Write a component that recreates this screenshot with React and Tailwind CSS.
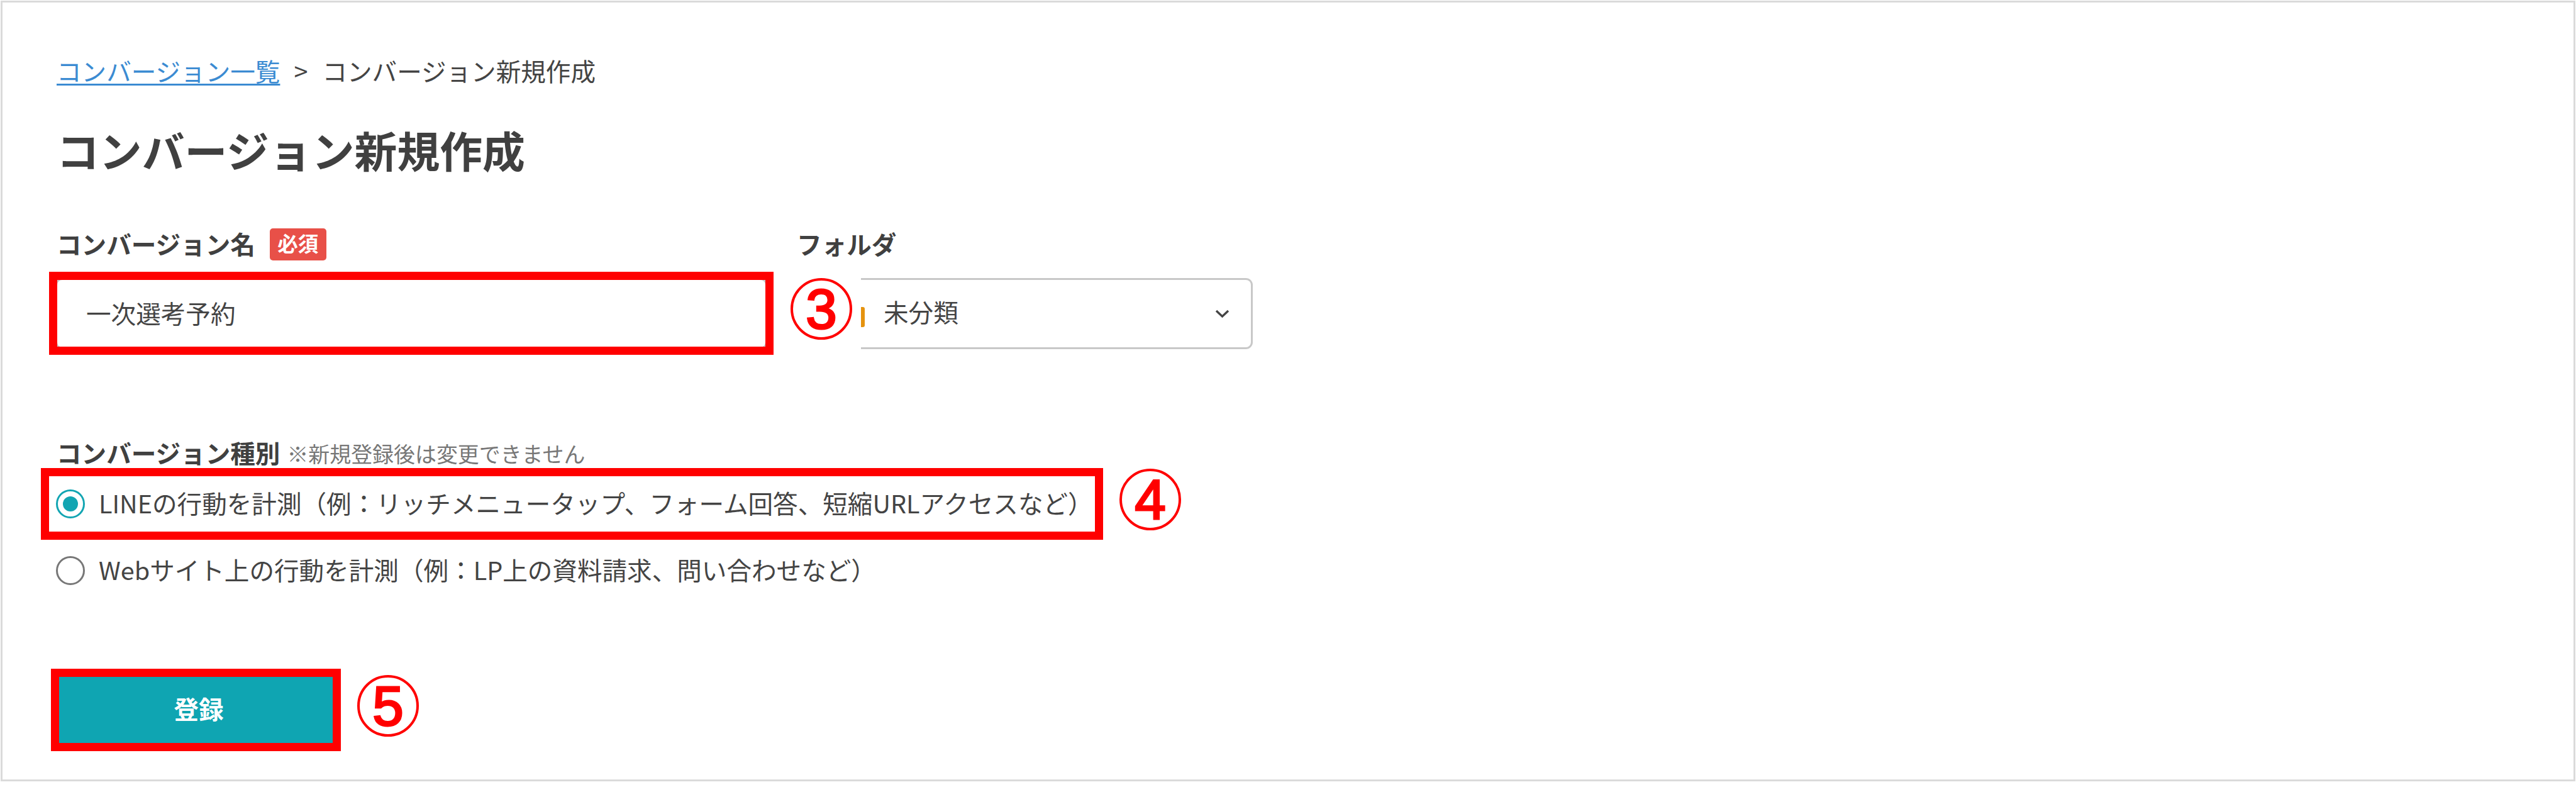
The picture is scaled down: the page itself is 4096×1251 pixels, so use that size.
function StepMark({ n, className }) {
  return (
    <span
      className={`absolute flex h-[98px] w-[98px] items-center justify-center rounded-full border-4 border-[#ff0000] bg-white font-['Liberation_Sans',sans-serif] text-[89px] leading-none font-normal text-[#ff0000] [-webkit-text-stroke:3px_#ff0000] ${className}`}
    >
      {n}
    </span>
  );
}

function Frame({ className }) {
  return <div className={`pointer-events-none absolute border-[13px] border-[#ff0000] ${className}`} />;
}

function Radio({ checked, children }) {
  return (
    <label className="flex h-[60px] items-center whitespace-nowrap">
      <span
        className={`relative top-[2px] mr-[22px] -ml-px flex h-[46px] w-[46px] shrink-0 items-center justify-center rounded-full border-[3px] ${
          checked ? "border-[#12a5b2]" : "border-[#777777]"
        }`}
      >
        {checked && <span className="h-[24px] w-[24px] rounded-full bg-[#12a5b2]" />}
      </span>
      <span>{children}</span>
    </label>
  );
}

export default function App() {
  return (
    <div className="h-[1251px] w-[4096px] overflow-hidden bg-white p-px font-['Noto_Sans_CJK_JP',sans-serif] text-[39.58px] leading-[60px] text-[#444444]">
      <main className="flex h-[1241px] flex-col border-[3px] border-[#dadada] pt-[78px] pl-[86px]">
        <nav className="flex h-[60px] whitespace-nowrap">
          <a className="text-[#3b8bd2] underline decoration-[2.5px] underline-offset-[4px]">コンバージョン一覧</a>
          <span className="ml-[22px] w-[45px]">&gt;</span>
          <span>コンバージョン新規作成</span>
        </nav>

        <h1 className="mt-[54px] text-[67.85px] leading-[84px] font-bold text-[#404040]">コンバージョン新規作成</h1>

        <div className="mt-[77px] flex">
          <div className="w-[1177px]">
            <div className="flex h-[60px] items-center font-bold text-[#404040]">
              コンバージョン名
              <span className="relative top-[1px] ml-[23px] flex h-[51px] w-[90px] items-center justify-center rounded-[5px] bg-[#e85048] pb-[5px] text-[32.5px] leading-[46px] text-white">
                必須
              </span>
            </div>
            <div className="relative mt-[25px] -ml-[2px] w-[1132px]">
              <div className="flex h-[113px] items-center rounded-[11px] border-[3px] border-[#c8c8c8] pb-[3px] pl-[46px]">
                一次選考予約
              </div>
              <Frame className="-top-[10px] -left-[10px] h-[132px] w-[1152px]" />
              <StepMark n="3" className="top-0 left-[1169px]" />
            </div>
          </div>
          <div className="w-[725px]">
            <div className="h-[60px] font-bold text-[#404040]">フォルダ</div>
            <div className="mt-[25px] ml-[102px] flex h-[113px] items-center rounded-r-[11px] border-[3px] border-l-0 border-[#c8c8c8]">
              <span className="mt-[10px] h-[32px] w-[6px] rounded-r-[3px] bg-[#e5930f]" />
              <span className="mb-[7px] ml-[30px]">未分類</span>
              <svg className="mr-[34px] ml-auto h-[14px] w-[23px]" viewBox="0 0 23 14" fill="none" stroke="#444444" strokeWidth="3.4">
                <path d="M2 2 L11.5 11 L21 2" />
              </svg>
            </div>
          </div>
        </div>

        <div className="mt-[134px] flex h-[60px] items-center whitespace-nowrap">
          <span className="font-bold text-[#404040]">コンバージョン種別</span>
          <span className="relative top-[2px] ml-[11px] text-[33.93px] text-[#777777]">※新規登録後は変更できません</span>
        </div>

        <div className="relative mt-[20px]">
          <Radio checked>LINEの行動を計測（例：リッチメニュータップ、フォーム回答、短縮URLアクセスなど）</Radio>
          <Frame className="-top-[25px] -left-[25px] h-[114px] w-[1689px]" />
          <StepMark n="4" className="-top-[24px] left-[1690px]" />
        </div>
        <div className="mt-[46px]">
          <Radio>Webサイト上の行動を計測（例：LP上の資料請求、問い合わせなど）</Radio>
        </div>

        <div className="relative mt-[141px] w-[442px]">
          <button className="flex h-[105px] w-full items-center justify-center bg-[#0fa5b2] pb-[5px] pl-[10px] font-bold text-white">登録</button>
          <Frame className="-top-[13px] -left-[9px] h-[131px] w-[461px]" />
          <StepMark n="5" className="-top-[3px] left-[478px]" />
        </div>
      </main>
    </div>
  );
}
